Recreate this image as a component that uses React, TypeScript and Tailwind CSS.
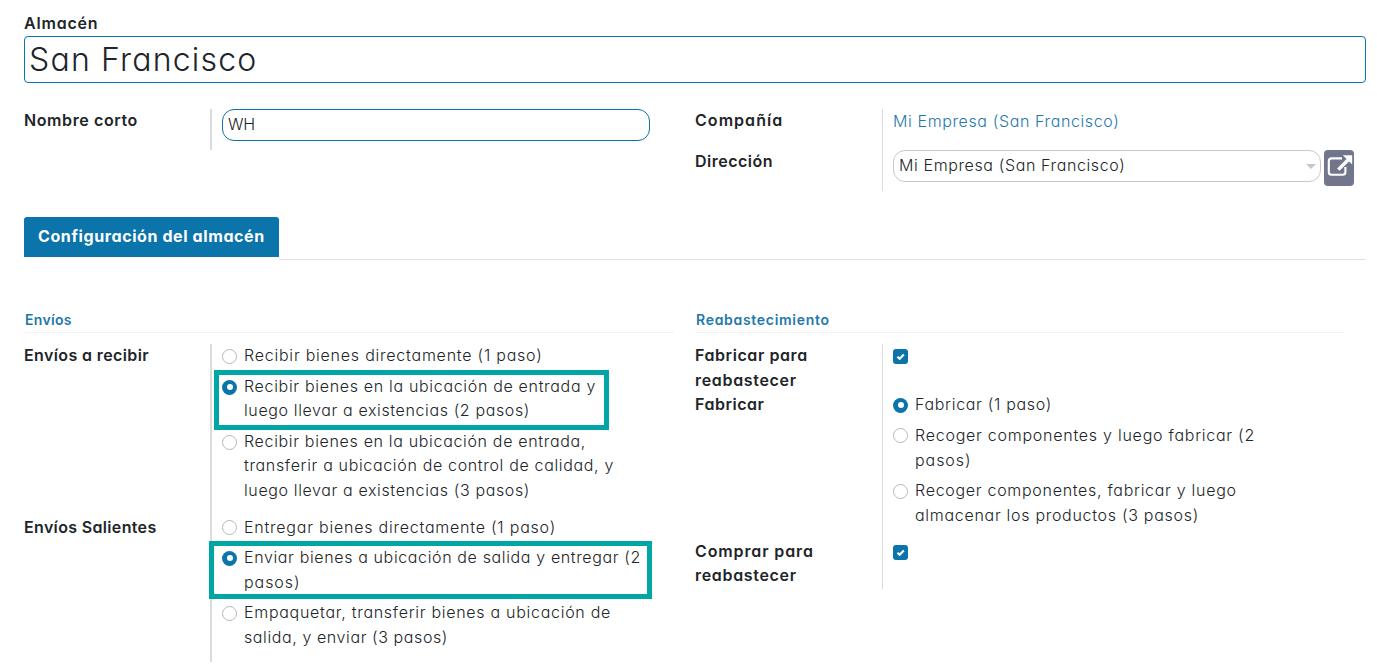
function T({ c = '', children }: { c?: string; children: string }) {
  return <span className={'block whitespace-nowrap ' + c}>{children}</span>;
}

function Radio({ on = false }: { on?: boolean }) {
  return on ? (
    <span className="mt-[5px] flex h-[15px] w-[15px] shrink-0 items-center justify-center rounded-full bg-[#0b74aa]">
      <span className="h-[6px] w-[6px] rounded-full bg-white" />
    </span>
  ) : (
    <span className="mt-[5px] h-[15px] w-[15px] shrink-0 rounded-full border border-[#b4b9c0] bg-white" />
  );
}

type OptionProps = { on?: boolean; lines: [string, string][]; box?: string; nudge?: string };

function Option({ on, lines, box, nudge = '-mt-[0.6px]' }: OptionProps) {
  return (
    <div className="relative flex gap-[7px]">
      <Radio on={on} />
      <div className={'mb-[0.6px] flex flex-col items-start ' + nudge}>
        {lines.map(([t, c]) => <T key={t} c={c}>{t}</T>)}
      </div>
      {box && <span className={'absolute border-[5px] border-[#00a5a5] ' + box} />}
    </div>
  );
}

function Check() {
  return (
    <span className="mt-[5px] flex h-[15px] w-[15px] items-center justify-center rounded-[3px] bg-[#0b74aa]">
      <svg viewBox="0 0 15 15" className="h-[15px] w-[15px]" fill="none" stroke="white" strokeWidth="2.2"><path d="M4.4 7.7 6.7 9.8 10.8 5.5" /></svg>
    </span>
  );
}

export default function App() {
  return (
    <div className="h-[666px] w-[1377px] overflow-hidden bg-white pl-6 pr-[11px] pt-[11px] font-['Inter',sans-serif] text-[16px] font-light leading-[24.5px] text-[#212529] [font-feature-settings:'cv11']">
      <div className="h-[25px] font-semibold"><T c="tracking-[0.8px]">Almacén</T></div>
      <div className="flex h-[47px] items-center rounded-[4px] border border-[#0b74aa] pl-[4px] pt-[2px] text-[32px]"><T c="tracking-[1.2px]">San Francisco</T></div>

      <div className="mt-[26px] flex h-[82px]">
        <div className="-mt-px w-[186px] font-semibold"><T c="tracking-[0.6px]">Nombre corto</T></div>
        <div className="h-[41px] w-[461px] border-l-2 border-[#dcdcdc] pl-[10px]">
          <div className="flex h-8 w-[428px] items-center rounded-[12px] border border-[#0b74aa] pb-[2px] pl-[5px]"><T c="tracking-[-0.15px]">WH</T></div>
        </div>
        <div className="-mt-px ml-6 w-[187px] font-semibold">
          <div className="h-[41px]"><T c="tracking-[1.05px]">Compañía</T></div>
          <T c="tracking-[0.5px]">Dirección</T>
        </div>
        <div className="border-l border-[#dcdcdc] pl-[10px]">
          <div className="h-[41px] text-[#1f78ac]"><T c="tracking-[0.62px]">Mi Empresa (San Francisco)</T></div>
          <div className="flex gap-[3px]">
            <div className="flex h-8 w-[428px] items-center justify-between rounded-[12px] border border-[#c8c8c8] pl-[5px] pr-[4px]">
              <T c="mb-[2px] tracking-[0.62px]">Mi Empresa (San Francisco)</T>
              <svg viewBox="0 0 10 5" className="h-[5px] w-[10px]" fill="#c8c8c8"><path d="M0 0H10L5 5Z" /></svg>
            </div>
            <div className="h-9 w-[30px] rounded-[4px] bg-[#72768c]">
              <svg viewBox="0 0 30 36" className="h-9 w-[30px]" fill="none" stroke="white" strokeWidth="2.1"><path d="M18 8.4H7.6Q4.8 8.4 4.8 11.2V22Q4.8 24.8 7.6 24.8H18.6Q21.4 24.8 21.4 22V17" /><path d="M14.3 19.6 24 10" strokeWidth="3.4" /><path d="M18.8 5.2H28.2V14.6Z" fill="white" stroke="none" /></svg>
            </div>
          </div>
        </div>
      </div>

      <div className="mt-[26px] flex h-[43px]">
        <div className="flex h-10 w-[255px] items-center rounded-t-[3px] bg-[#0b74aa] pb-[2px] pl-[14px] font-bold text-white"><T c="tracking-[0.6px]">Configuración del almacén</T></div>
        <div className="flex-1 border-b border-[#dee2e6]" />
      </div>

      <div className="mt-12 flex">
        <div className="w-[650px]">
          <div className="ml-px h-[25px] border-b border-[#f1f2f4] text-[14px] font-semibold text-[#1f78ac]"><T c="tracking-[0.32px]">Envíos</T></div>
          <div className="mt-[11px] flex h-[318px]">
            <div className="-mt-px w-[186px] font-semibold">
              <div className="h-[172px]"><T c="tracking-[0.38px]">Envíos a recibir</T></div>
              <T c="tracking-[0.34px]">Envíos Salientes</T>
            </div>
            <div className="flex flex-col gap-3 border-l-2 border-[#dcdcdc] pl-[10px]">
              <div className="flex flex-col gap-[6px]">
                <Option lines={[['Recibir bienes directamente (1 paso)', 'tracking-[0.77px]']]} />
                <Option on lines={[['Recibir bienes en la ubicación de entrada y', 'tracking-[0.68px]'], ['luego llevar a existencias (2 pasos)', 'tracking-[0.622px]']]} box="-left-2 -top-[5px] h-[60px] w-[395px]" />
                <Option lines={[['Recibir bienes en la ubicación de entrada,', 'tracking-[0.67px]'], ['transferir a ubicación de control de calidad, y', 'tracking-[0.661px]'], ['luego llevar a existencias (3 pasos)', 'tracking-[0.625px]']]} />
              </div>
              <div className="flex flex-col gap-[6px]">
                <Option nudge="-mt-[0.4px]" lines={[['Entregar bienes directamente (1 paso)', 'tracking-[0.777px]']]} />
                <Option nudge="-mt-[0.4px]" on lines={[['Enviar bienes a ubicación de salida y entregar (2', 'tracking-[0.634px]'], ['pasos)', 'tracking-[0.95px]']]} box="-left-[13px] -top-[5px] h-[58px] w-[443px]" />
                <Option nudge="-mt-[0.6px]" lines={[['Empaquetar, transferir bienes a ubicación de', 'tracking-[0.715px]'], ['salida, y enviar (3 pasos)', 'tracking-[0.593px]']]} />
              </div>
            </div>
          </div>
        </div>
        <div className="ml-[21px] w-[649px]">
          <div className="ml-px h-[25px] border-b border-[#f1f2f4] text-[14px] font-semibold text-[#1f78ac]"><T c="tracking-[0.7px]">Reabastecimiento</T></div>
          <div className="mt-[11px] flex h-[245px]">
            <div className="-mt-px w-[187px] font-semibold">
              <T c="tracking-[0.58px]">Fabricar para</T>
              <T c="tracking-[0.68px]">reabastecer</T>
              <div className="h-[146.6px]"><T c="tracking-[0.52px]">Fabricar</T></div>
              <T c="tracking-[0.88px]">Comprar para</T>
              <T c="tracking-[0.68px]">reabastecer</T>
            </div>
            <div className="border-l border-[#dcdcdc] pl-[10px]">
              <div className="flex h-[48.6px] items-start"><Check /></div>
              <div className="flex h-[147.4px] flex-col gap-[6px]">
                <Option nudge="-mt-[0.3px]" on lines={[['Fabricar (1 paso)', 'tracking-[0.688px]']]} />
                <Option nudge="-mt-[0.3px]" lines={[['Recoger componentes y luego fabricar (2', 'tracking-[0.749px]'], ['pasos)', 'tracking-[0.95px]']]} />
                <Option nudge="-mt-[0.3px]" lines={[['Recoger componentes, fabricar y luego', 'tracking-[0.71px]'], ['almacenar los productos (3 pasos)', 'tracking-[0.71px]']]} />
              </div>
              <Check />
            </div>
          </div>
        </div>
      </div>
    </div>
  );
}
